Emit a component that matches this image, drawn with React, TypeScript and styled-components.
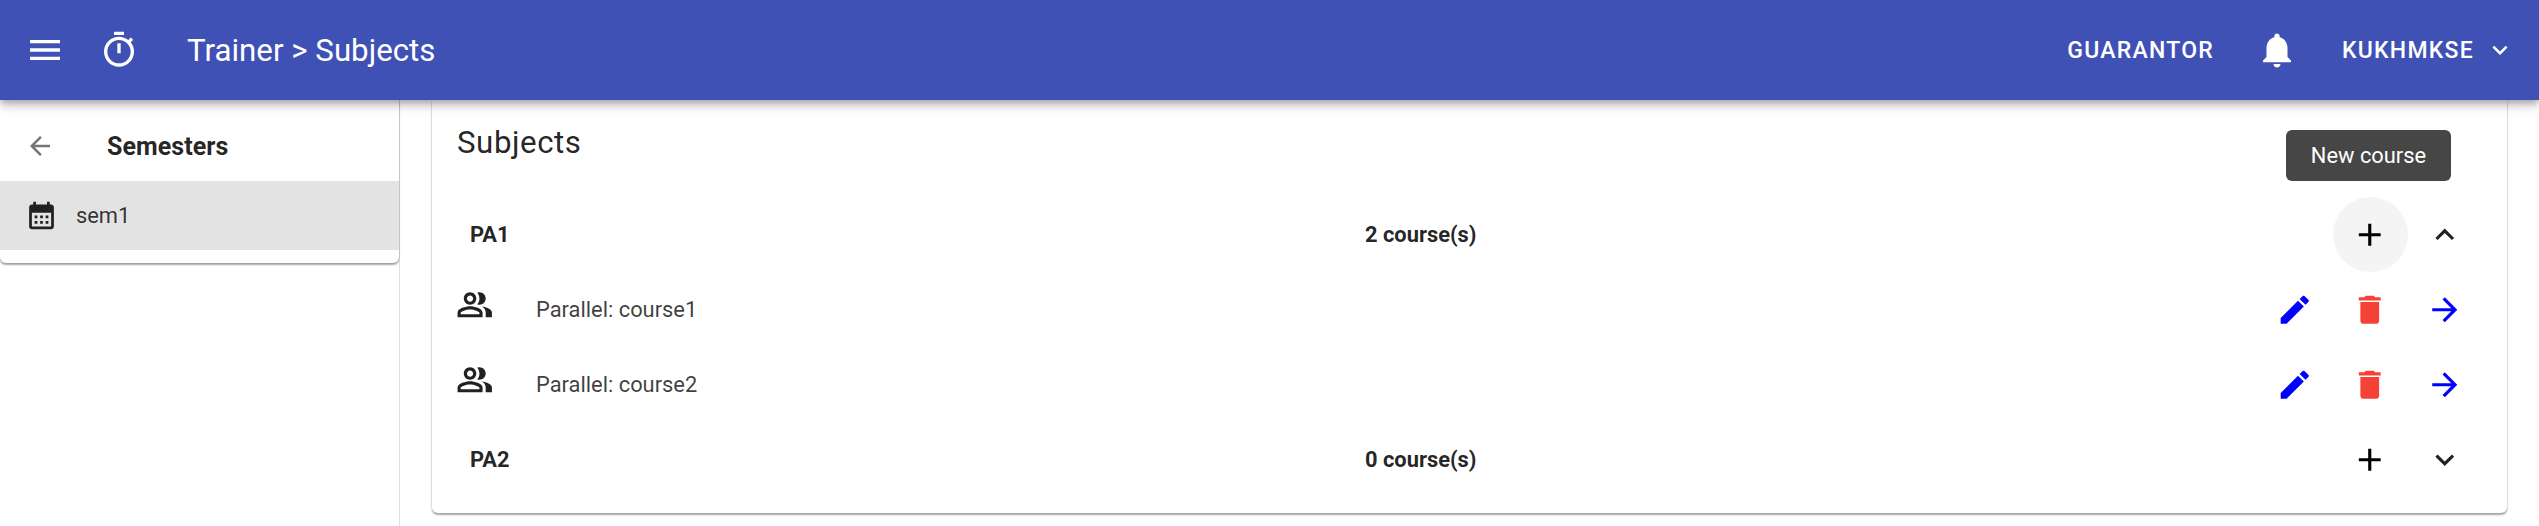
import styled, { createGlobalStyle } from 'styled-components';

const GlobalStyle = createGlobalStyle`
    html, body {
        margin: 0;
        height: 100%;
        overflow: hidden;
        background: #fff;
        font-family: Roboto, "Liberation Sans", sans-serif;
        color: rgba(0, 0, 0, 0.87);
    }
`;

const PageWrapper = styled.div`
    display: flex;
    flex-direction: column;
    height: 526px;
`;

const AppBar = styled.header`
    position: relative;
    z-index: 2;
    display: flex;
    align-items: center;
    flex: none;
    height: 100px;
    padding: 0 24px 0 25px;
    box-sizing: border-box;
    background: #3f51b5;
    color: #fff;
    box-shadow: 0 3px 6px -1px rgba(0, 0, 0, 0.2), 0 6px 8px 0 rgba(0, 0, 0, 0.14), 0 2px 16px 0 rgba(0, 0, 0, 0.12);
`;

const AppTitle = styled.h1`
    margin: 0 0 0 48px;
    font-size: 31.25px;
    font-weight: 400;
    letter-spacing: 0;
`;

const Spacer = styled.div`
    flex: 1;
`;

const AppBarLabel = styled.span`
    font-size: 23px;
    font-weight: 500;
    letter-spacing: 1.25px;
`;

const Icon = styled.svg<{ $size: number; $color?: string }>`
    display: block;
    flex: none;
    width: ${({ $size }) => $size}px;
    height: ${({ $size }) => $size}px;
    fill: ${({ $color }) => $color || 'currentColor'};
`;

const MenuButton = styled.span`
    display: flex;
    margin-right: 34px;
`;

const BellButton = styled.span`
    display: flex;
    margin: 0 44px 0 42px;
`;

const UserChevron = styled.span`
    display: flex;
    margin-left: 11px;
`;

const Body = styled.div`
    display: flex;
    flex: 1;
    min-height: 0;
`;

const Sidebar = styled.aside`
    flex: none;
    width: 400px;
    box-sizing: border-box;
    border-right: 1px solid #e0e0e0;
`;

const SidebarCard = styled.div`
    height: 163px;
    box-sizing: border-box;
    background: #fff;
    border-radius: 0 0 6px 6px;
    box-shadow: 0 2px 2px rgba(0, 0, 0, 0.35), 0 0 2px rgba(0, 0, 0, 0.12);
`;

const SidebarHeader = styled.div`
    display: flex;
    align-items: center;
    height: 81px;
    box-sizing: border-box;
    padding: 11px 0 0 25px;
    color: #757575;
`;

const SidebarTitle = styled.span`
    margin-left: 52px;
    font-size: 25px;
    font-weight: 700;
    letter-spacing: 0.05px;
    color: rgba(0, 0, 0, 0.87);
`;

const SemesterItem = styled.div`
    display: flex;
    align-items: center;
    height: 69px;
    padding-left: 25px;
    background: #e3e3e3;
    color: #212121;
`;

const SemesterLabel = styled.span`
    margin-left: 18px;
    font-size: 21.875px;
    color: rgba(0, 0, 0, 0.78);
`;

const Main = styled.main`
    flex: 1;
    min-width: 0;
    display: flex;
    padding: 0 32px 13px;
`;

const SubjectsCard = styled.section`
    position: relative;
    flex: 1;
    padding: 0 24.5px 0 25px;
    background: #fff;
    border-radius: 0 0 6px 6px;
    box-shadow: 0 2px 2px rgba(0, 0, 0, 0.35), 0 0 2px rgba(0, 0, 0, 0.14);
`;

const CardTitle = styled.h2`
    margin: 0;
    height: 97px;
    font-size: 31.25px;
    line-height: 86px;
    font-weight: 400;
    letter-spacing: 0.55px;
`;

const Tooltip = styled.div`
    position: absolute;
    top: 30px;
    right: 56px;
    width: 165px;
    height: 51px;
    display: flex;
    align-items: center;
    justify-content: center;
    background: #464646;
    border-radius: 6px;
    color: #fff;
    font-size: 21.875px;
`;

const Row = styled.div`
    display: flex;
    align-items: center;
    height: 75px;
`;

const SubjectName = styled.div`
    width: 895px;
    flex: none;
    padding-left: 13px;
    box-sizing: content-box;
    font-size: 21.875px;
    font-weight: 700;
`;

const CourseCount = styled.div`
    flex: 1;
    font-size: 21.875px;
    font-weight: 700;
`;

const CourseIcon = styled.div`
    width: 79px;
    flex: none;
    margin-bottom: 9px;
    margin-left: -1px;
`;

const CourseName = styled.div`
    flex: 1;
    margin-left: 1px;
    font-size: 21.875px;
    color: rgba(0, 0, 0, 0.76);
`;

const ActionButton = styled.button<{ $hover?: boolean }>`
    display: flex;
    align-items: center;
    justify-content: center;
    flex: none;
    width: 75px;
    height: 75px;
    padding: 0;
    border: 0;
    border-radius: 50%;
    background: ${({ $hover }) => ($hover ? '#f4f4f4' : 'transparent')};
    color: inherit;
`;

const paths = {
    menu: 'M3 18h18v-2H3v2zm0-5h18v-2H3v2zm0-7v2h18V6H3z',
    timer: 'M15 1H9v2h6V1zm-4 13h2V8h-2v6zm8.03-6.61l1.42-1.42c-.43-.51-.9-.99-1.41-1.41l-1.42 1.42C16.07 4.74 14.12 4 12 4c-4.97 0-9 4.03-9 9s4.02 9 9 9 9-4.03 9-9c0-2.12-.74-4.07-1.97-5.61zM12 20c-3.87 0-7-3.13-7-7s3.13-7 7-7 7 3.13 7 7-3.13 7-7 7z',
    bell: 'M12 22c1.1 0 2-.9 2-2h-4c0 1.1.89 2 2 2zm6-6v-5c0-3.07-1.64-5.64-4.5-6.32V4c0-.83-.67-1.5-1.5-1.5s-1.5.67-1.5 1.5v.68C7.63 5.36 6 7.92 6 11v5l-2 2v1h16v-1l-2-2z',
    back: 'M20 11H7.83l5.59-5.59L12 4l-8 8 8 8 1.41-1.41L7.83 13H20v-2z',
    calendar: 'M19 4h-1V2h-2v2H8V2H6v2H5c-1.11 0-1.99.9-1.99 2L3 20c0 1.1.89 2 2 2h14c1.1 0 2-.9 2-2V6c0-1.1-.9-2-2-2zm0 16H5V10h14v10zM9 14H7v-2h2v2zm4 0h-2v-2h2v2zm4 0h-2v-2h2v2zm-8 4H7v-2h2v2zm4 0h-2v-2h2v2zm4 0h-2v-2h2v2z',
    people: 'M16.67 13.13C18.04 14.06 19 15.32 19 17v3h4v-3c0-2.18-3.57-3.47-6.33-3.87zM15 12c2.21 0 4-1.79 4-4s-1.79-4-4-4c-.47 0-.91.1-1.33.24C14.5 5.27 15 6.58 15 8s-.5 2.73-1.33 3.76c.42.14.86.24 1.33.24zM9 12c2.21 0 4-1.79 4-4s-1.79-4-4-4-4 1.79-4 4 1.79 4 4 4zm0-6c1.1 0 2 .9 2 2s-.9 2-2 2-2-.9-2-2 .9-2 2-2zM9 13c-2.67 0-8 1.34-8 4v3h16v-3c0-2.66-5.33-4-8-4zm6 5H3v-.99C3.2 16.29 6.3 15 9 15s5.8 1.29 6 2v1z',
    add: 'M19 13h-6v6h-2v-6H5v-2h6V5h2v6h6v2z',
    less: 'M12 8l-6 6 1.41 1.41L12 10.83l4.59 4.58L18 14z',
    more: 'M16.59 8.59L12 13.17 7.41 8.59 6 10l6 6 6-6z',
    edit: 'M3 17.25V21h3.75L17.81 9.94l-3.75-3.75L3 17.25zM20.71 7.04c.39-.39.39-1.02 0-1.41l-2.34-2.34c-.39-.39-1.02-.39-1.41 0l-1.83 1.83 3.75 3.75 1.83-1.83z',
    trash: 'M6 19c0 1.1.9 2 2 2h8c1.1 0 2-.9 2-2V7H6v12zM19 4h-3.5l-1-1h-5l-1 1H5v2h14V4z',
    forward: 'M12 4l-1.41 1.41L16.17 11H4v2h12.17l-5.58 5.59L12 20l8-8z',
};

type TGlyph = {
    name: keyof typeof paths;
    size?: number;
    color?: string;
};

function Glyph({ name, size = 37.5, color }: TGlyph) {
    return (
        <Icon $size={size} $color={color} viewBox="0 0 24 24">
            <path d={paths[name]} />
        </Icon>
    );
}

type TSubjectRow = {
    name: string;
    count: string;
    open: boolean;
    hover?: boolean;
};

function SubjectRow({ name, count, open, hover }: TSubjectRow) {
    return (
        <Row>
            <SubjectName>{name}</SubjectName>
            <CourseCount>{count}</CourseCount>
            <ActionButton $hover={hover}><Glyph name="add" color="#000" /></ActionButton>
            <ActionButton><Glyph name={open ? 'less' : 'more'} /></ActionButton>
        </Row>
    );
}

function CourseRow({ name }: { name: string }) {
    return (
        <Row>
            <CourseIcon><Glyph name="people" /></CourseIcon>
            <CourseName>Parallel: {name}</CourseName>
            <ActionButton><Glyph name="edit" color="#0000ff" /></ActionButton>
            <ActionButton><Glyph name="trash" color="#f44336" /></ActionButton>
            <ActionButton><Glyph name="forward" color="#0000ff" /></ActionButton>
        </Row>
    );
}

export default function App() {
    return (
        <PageWrapper>
            <GlobalStyle />
            <AppBar>
                <MenuButton><Glyph name="menu" size={40} /></MenuButton>
                <Glyph name="timer" size={40} />
                <AppTitle>Trainer &gt; Subjects</AppTitle>
                <Spacer />
                <AppBarLabel>GUARANTOR</AppBarLabel>
                <BellButton><Glyph name="bell" size={42} /></BellButton>
                <AppBarLabel>KUKHMKSE</AppBarLabel>
                <UserChevron><Glyph name="more" size={30} /></UserChevron>
            </AppBar>
            <Body>
                <Sidebar>
                    <SidebarCard>
                        <SidebarHeader>
                            <Glyph name="back" size={30} />
                            <SidebarTitle>Semesters</SidebarTitle>
                        </SidebarHeader>
                        <SemesterItem>
                            <Glyph name="calendar" size={33} />
                            <SemesterLabel>sem1</SemesterLabel>
                        </SemesterItem>
                    </SidebarCard>
                </Sidebar>
                <Main>
                    <SubjectsCard>
                        <CardTitle>Subjects</CardTitle>
                        <Tooltip>New course</Tooltip>
                        <SubjectRow name="PA1" count="2 course(s)" open hover />
                        <CourseRow name="course1" />
                        <CourseRow name="course2" />
                        <SubjectRow name="PA2" count="0 course(s)" open={false} />
                    </SubjectsCard>
                </Main>
            </Body>
        </PageWrapper>
    );
}
